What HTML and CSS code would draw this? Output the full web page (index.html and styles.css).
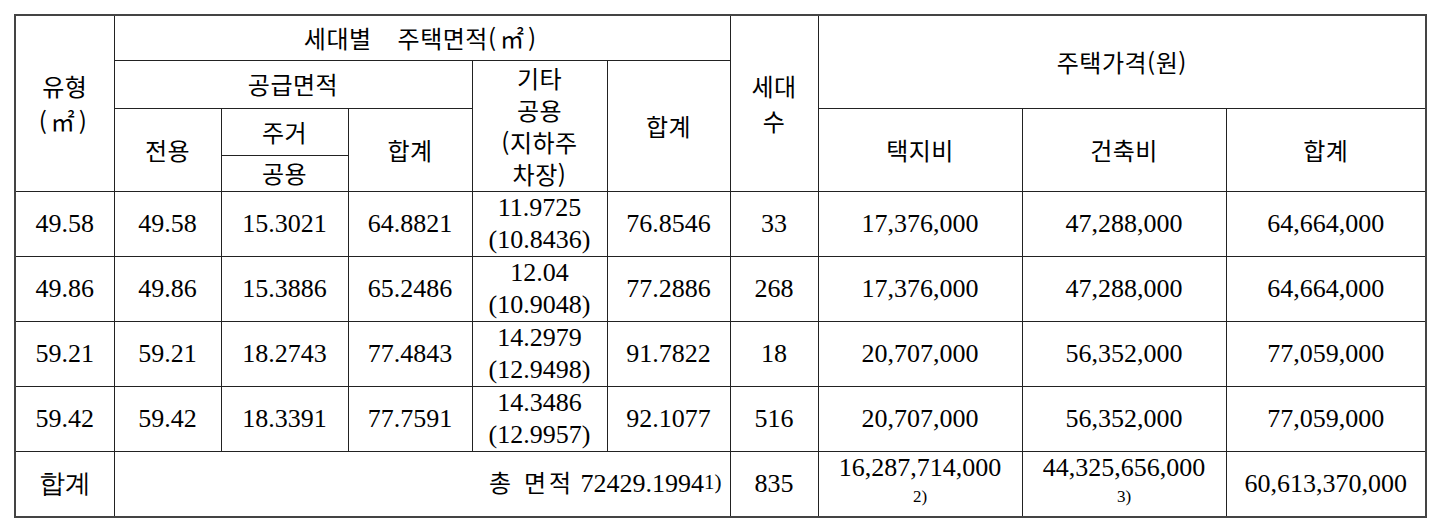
FILE: index.html
```html
<!DOCTYPE html>
<html lang="ko">
<head>
<meta charset="utf-8">
<link rel="stylesheet" href="styles.css">
</head>
<body>
<table class="grid">
  <colgroup>
    <col class="c1"><col class="c2"><col class="c3"><col class="c4"><col class="c5">
    <col class="c6"><col class="c7"><col class="c8"><col class="c9"><col class="c10">
  </colgroup>
  <thead>
    <tr class="h1">
      <th rowspan="4" class="tall">유형<br><span class="unit">(㎡)</span></th>
      <th colspan="5">세대별<span class="sp"></span>주택면적<span class="unit">(㎡)</span></th>
      <th rowspan="4" class="tall">세대<br>수</th>
      <th colspan="3" rowspan="2">주택가격(원)</th>
    </tr>
    <tr class="h2">
      <th colspan="3">공급면적</th>
      <th rowspan="3" class="multi">기타<br>공용<br>(지하주<br>차장)</th>
      <th rowspan="3">합계</th>
    </tr>
    <tr class="h3">
      <th rowspan="2">전용</th>
      <th>주거</th>
      <th rowspan="2">합계</th>
      <th rowspan="2">택지비</th>
      <th rowspan="2">건축비</th>
      <th rowspan="2">합계</th>
    </tr>
    <tr class="h4">
      <th>공용</th>
    </tr>
  </thead>
  <tbody>
    <tr>
      <td>49.58</td><td>49.58</td><td>15.3021</td><td>64.8821</td>
      <td class="two">11.9725<br>(10.8436)</td><td>76.8546</td><td>33</td>
      <td>17,376,000</td><td>47,288,000</td><td>64,664,000</td>
    </tr>
    <tr>
      <td>49.86</td><td>49.86</td><td>15.3886</td><td>65.2486</td>
      <td class="two">12.04<br>(10.9048)</td><td>77.2886</td><td>268</td>
      <td>17,376,000</td><td>47,288,000</td><td>64,664,000</td>
    </tr>
    <tr>
      <td>59.21</td><td>59.21</td><td>18.2743</td><td>77.4843</td>
      <td class="two">14.2979<br>(12.9498)</td><td>91.7822</td><td>18</td>
      <td>20,707,000</td><td>56,352,000</td><td>77,059,000</td>
    </tr>
    <tr>
      <td>59.42</td><td>59.42</td><td>18.3391</td><td>77.7591</td>
      <td class="two">14.3486<br>(12.9957)</td><td>92.1077</td><td>516</td>
      <td>20,707,000</td><td>56,352,000</td><td>77,059,000</td>
    </tr>
    <tr class="total">
      <td class="ko">합계</td>
      <td colspan="5" class="area"><span class="ko">총 면적</span> 72429.1994<span class="note">1)</span></td>
      <td>835</td>
      <td class="two">16,287,714,000<br><span class="fn">2)</span></td>
      <td class="two">44,325,656,000<br><span class="fn">3)</span></td>
      <td>60,613,370,000</td>
    </tr>
  </tbody>
</table>
</body>
</html>
```
FILE: styles.css
```css
html, body {
  margin: 0;
  padding: 0;
  background: #ffffff;
}
body {
  padding: 14px 0 0 14px;
}
.grid {
  border-collapse: collapse;
  table-layout: fixed;
  width: 1411px;
  border: 2px solid #444;
  color: #000;
}
.c1 { width: 99px; }
.c2 { width: 107px; }
.c3 { width: 127px; }
.c4 { width: 124px; }
.c5 { width: 135px; }
.c6 { width: 123px; }
.c7 { width: 88px; }
.c8 { width: 204px; }
.c9 { width: 204px; }
.c10 { width: 200px; }
.grid th, .grid td {
  border: 1px solid #222;
  padding: 0;
  text-align: center;
  vertical-align: middle;
  overflow: hidden;
  white-space: nowrap;
}
.grid th {
  font-family: "Noto Sans CJK KR", "Noto Sans", sans-serif;
  font-weight: 400;
  font-size: 24px;
  line-height: 32px;
  letter-spacing: 0.5px;
}
.grid th.tall {
  line-height: 35px;
}
.unit {
  letter-spacing: 4px;
}
.sp {
  display: inline-block;
  width: 26px;
}
.h1 { height: 45px; }
.h2 { height: 48px; }
.h3 { height: 47px; }
.h4 { height: 36px; }
.grid td {
  font-family: "Liberation Serif", "Times New Roman", serif;
  font-size: 26px;
  line-height: 32px;
  height: 64px;
}
.grid td.two {
  line-height: 32px;
}
.ko {
  font-family: "Noto Sans CJK KR", "Noto Sans", sans-serif;
  font-size: 24px;
}
.area {
  text-align: right !important;
  padding-right: 8px !important;
}
.area .ko {
  letter-spacing: 3px;
}
.note {
  font-size: 21px;
  position: relative;
  top: -3px;
}
.fn {
  font-size: 17px;
  line-height: 26px;
  display: inline-block;
  vertical-align: top;
}
.total .two {
  line-height: 30px;
}
```
